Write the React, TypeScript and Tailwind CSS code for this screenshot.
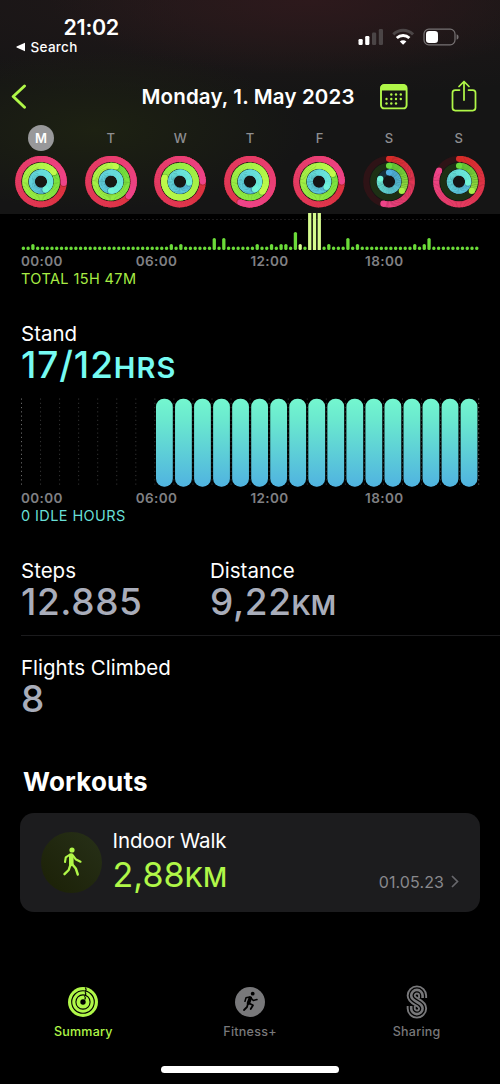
import type { ReactNode } from "react";
import clsx from "clsx";

type Rgb = [number, number, number];

// progress of each ring in laps: move, exercise, stand
const days = [
  { name: "M", rings: [1.26, 1.15, 1.42], selected: true },
  { name: "T", rings: [1.36, 1.05, 1.5] },
  { name: "W", rings: [1.25, 1.79, 1.27] },
  { name: "T", rings: [1.57, 1.36, 1.41] },
  { name: "F", rings: [1.25, 1.17, 1.35] },
  { name: "S", rings: [0.54, 0.35, 0.8] },
  { name: "S", rings: [0.83, 0.35, 1.27] },
];

const ringStyles: { r: number; from: Rgb; to: Rgb; track: string }[] = [
  { r: 22.75, from: [215, 45, 40], to: [238, 68, 138], track: "#2e1316" },
  { r: 15.8, from: [105, 220, 60], to: [192, 250, 75], track: "#1d3014" },
  { r: 9.15, from: [80, 175, 225], to: [112, 243, 215], track: "#172f3a" },
];

const hours = ["00:00", "06:00", "12:00", "18:00"];

// quarter hour bars that are higher than the idle dot
const exercise: Record<number, number> = {
  2: 6, 31: 6, 33: 6, 40: 12, 42: 12, 49: 6, 52: 6, 54: 6, 55: 6, 57: 18,
  58: 6, 60: 40, 61: 40, 62: 40, 64: 6, 68: 12, 70: 6, 82: 6, 84: 6, 85: 12,
};
const workoutBars = [58, 60, 61, 62];

const point = (r: number, lap: number) => {
  const a = lap * Math.PI * 2;
  return [26 + r * Math.sin(a), 26 - r * Math.cos(a)];
};

const mix = (from: Rgb, to: Rgb, t: number) =>
  `rgb(${from.map((c, i) => Math.round(c + (to[i] - c) * t)).join(",")})`;

const Ring = ({ index, value }: { index: number; value: number }) => {
  const { r, from, to, track } = ringStyles[index];
  const steps = 90;
  const reach = index === 1 && value < 1 ? 0.7 : 1;
  const [sx, sy] = point(r, 0);
  const [ex, ey] = point(r, value);
  const [hx, hy] = point(r, value + 0.3 / r / 2);

  return (
    <g>
      <circle cx="26" cy="26" r={r} fill="none" stroke={track} strokeWidth="6.2" />
      <circle cx={sx} cy={sy} r="3.05" fill={mix(from, to, 0)} />
      {Array.from({ length: steps }, (_, i) => {
        const [x1, y1] = point(r, (value * i) / steps);
        const [x2, y2] = point(r, (value * Math.min(i + 1.3, steps)) / steps);
        return (
          <path
            key={i}
            d={`M${x1} ${y1}A${r} ${r} 0 0 1 ${x2} ${y2}`}
            fill="none"
            stroke={mix(from, to, (reach * i) / steps)}
            strokeWidth="6.1"
          />
        );
      })}
      {value > 1 && <circle cx={hx} cy={hy} r="3" fill="#000" opacity="0.2" />}
      <circle cx={ex} cy={ey} r="3.05" fill={mix(from, to, reach)} />
    </g>
  );
};

const StatusBar = () => (
  <div className="flex h-[60px] justify-between pt-[16px]">
    <div className="pl-[16px]">
      <p className="pl-[47.5px] text-[21.5px] leading-[23px] font-semibold tracking-[-0.3px]">
        21:02
      </p>
      <div className="flex h-[16px] items-center">
        <svg width="10" height="10" viewBox="0 0 10 10" fill="#fff">
          <path d="M9 .8v8.4L.6 5.6Q0 5 .6 4.4z" />
        </svg>
        <p className="pl-[4.5px] text-[13.5px] leading-4 font-medium tracking-[0.3px]">Search</p>
      </div>
    </div>
    <div className="flex items-start pt-[12px] pr-[41px]">
      <svg width="26" height="18" viewBox="0 0 26 18" fill="#fff">
        <rect x=".5" y="11" width="4.2" height="6" rx="1.2" />
        <rect x="7.2" y="8" width="4.2" height="9" rx="1.2" />
        <rect x="14" y="4.5" width="4.2" height="12.5" rx="1.2" fill="#4b4546" />
        <rect x="20.8" y="1" width="4.2" height="16" rx="1.2" fill="#4b4546" />
      </svg>
      <svg className="ml-[8px]" width="22" height="18" viewBox="0 0 22 18" fill="none">
        <path d="M1.3 6.4C7 .9 15.4 .9 21 6.4" stroke="#4b4546" strokeWidth="2.9" />
        <path d="M4.8 10C8.4 6.6 13.8 6.6 17.4 10" stroke="#fff" strokeWidth="2.9" />
        <path d="M11.1 16.8L7.8 13.4C9.6 11.8 12.6 11.8 14.4 13.4z" fill="#fff" />
      </svg>
      <svg className="ml-[9px]" width="36" height="18" viewBox="0 0 36 18">
        <rect x="1" y="1.2" width="31" height="15.6" rx="4.8" fill="none" stroke="#777374" strokeWidth="1.2" />
        <rect x="3" y="3" width="12" height="12" rx="3.2" fill="#fff" />
        <path d="M33.6 6.3q2 .7 2 2.7t-2 2.7z" fill="#777374" />
      </svg>
    </div>
  </div>
);

const Header = () => (
  <header className="h-[214px] w-full overflow-hidden bg-[#151515] bg-[radial-gradient(ellipse_260px_75px_at_310px_0px,#2d191c,transparent),radial-gradient(ellipse_210px_80px_at_95px_130px,#1d2112,transparent),radial-gradient(ellipse_500px_100px_at_250px_0px,#211819,transparent)]">
    <StatusBar />
    <div className="flex h-[73px] items-center">
      <svg className="ml-[11px]" width="16" height="26" viewBox="0 0 16 26" fill="none">
        <path d="M13.5 2L2.2 12.500l11.300 10.800" stroke="#b0f748" strokeWidth="2.9" strokeLinecap="round" strokeLinejoin="round" />
      </svg>
      <h1 className="ml-[114.5px] w-[238px] text-[20.5px] leading-6 font-semibold tracking-[0.15px] whitespace-nowrap">
        Monday, 1. May 2023
      </h1>
      <svg width="28" height="26" viewBox="0 0 28 26" fill="none">
        <rect x="1" y="1" width="25.6" height="23.4" rx="3.2" stroke="#b0f748" strokeWidth="1.9" />
        <path d="M.5 6.5V4Q.5.5 4 .5h19.6Q27 .5 27 4v2.5z" fill="#b0f748" />
        {[10.5, 15, 19.5].map((y, row) =>
          [6.5, 11.3, 16, 20.8].map((x, col) =>
            (row === 0 && col === 0) || (row === 2 && col === 3) ? null : (
              <circle key={`${x}-${y}`} cx={x} cy={y} r="1.2" fill="#b0f748" />
            )
          )
        )}
      </svg>
      <svg className="-mt-[2px] ml-[43.5px]" width="26" height="32" viewBox="0 0 26 32" fill="none" stroke="#b0f748" strokeWidth="1.75" strokeLinecap="round" strokeLinejoin="round">
        <path d="M8.5 10H4.2Q1.5 10 1.5 12.7V27.8Q1.5 30.5 4.2 30.5H21.8Q24.5 30.5 24.5 27.8V12.7Q24.5 10 21.8 10H17.5" />
        <path d="M13 20V1.5M8 6.5l5-5 5 5" />
      </svg>
    </div>
    <div className="flex h-[81px] pl-[6.3px]">
      {days.map((day, i) => (
        <div key={i} className="flex w-[69.6px] flex-col items-center">
          <span
            className={clsx(
              "-mt-[8px] flex size-[26px] items-center justify-center rounded-full pt-px text-[13px]",
              day.selected ? "bg-[#98989a] font-semibold text-white" : "font-medium text-[#8e8e91]"
            )}
          >
            {day.name}
          </span>
          <svg className="mt-[4.5px] shrink-0" width="52" height="52" viewBox="0 0.4 52 52">
            {day.rings.map((value, n) => (
              <Ring key={n} index={n} value={value} />
            ))}
          </svg>
        </div>
      ))}
    </div>
  </header>
);

const HourLabels = () => (
  <div className="flex h-[18px] items-center text-[13.5px] font-semibold tracking-[0.4px] text-[#808084]">
    {hours.map((hour) => (
      <span key={hour} className="w-[114.7px]">
        {hour}
      </span>
    ))}
  </div>
);

const ExerciseChart = () => (
  <svg className="-ml-px" width="460" height="37" viewBox="20 213 460 37">
    <path d="M20.5 219.5H479" stroke="#3a3638" strokeDasharray="1 3" />
    {Array.from({ length: 96 }, (_, i) => {
      const h = exercise[i] ?? 3.5;
      return (
        <rect
          key={i}
          x={21.7 + i * 4.773}
          y={250 - h}
          width="3.3"
          height={h}
          rx={h > 20 ? 0.6 : 1.6}
          fill={workoutBars.includes(i) ? "#d5fb8e" : "#6bdb39"}
        />
      );
    })}
  </svg>
);

const StandChart = () => (
  <svg className="-ml-px" width="460" height="90" viewBox="20 398 460 90">
    <defs>
      <linearGradient id="stand" x1="0" y1="0" x2="0" y2="1">
        <stop offset="0" stopColor="#74f7cf" />
        <stop offset="0.25" stopColor="#6ae8cf" />
        <stop offset="1" stopColor="#50b3e0" />
      </linearGradient>
    </defs>
    {Array.from({ length: 25 }, (_, i) => (
      <path
        key={i}
        d={`M${21.5 + i * 19.05} 398.5V486`}
        stroke={i % 24 === 0 ? "#6a6a6a" : "#333"}
        strokeDasharray="1.2 3.05"
      />
    ))}
    {Array.from({ length: 17 }, (_, i) => (
      <rect
        key={i}
        x={156 + i * 19.04}
        y="398.7"
        width="16.8"
        height="88"
        rx="8"
        fill="url(#stand)"
      />
    ))}
  </svg>
);

const Stat = ({ title, children, className }: { title: string; children: ReactNode; className?: string }) => (
  <div className={className}>
    <p className="text-[20.5px] leading-[30px]">{title}</p>
    <p className="text-[37px] leading-[32px] font-medium tracking-[0.6px] text-[#a9adba]">{children}</p>
  </div>
);

const Tab = ({ label, active, children }: { label: string; active?: boolean; children: ReactNode }) => (
  <div className={clsx("flex flex-1 flex-col items-center", active ? "text-[#b0f748]" : "text-[#78787a]")}>
    <div className="flex h-[40px] items-center">{children}</div>
    <span className="mt-[2px] text-[12.5px] leading-[16px] font-medium tracking-[0.25px]">{label}</span>
  </div>
);

const App = () => {
  return (
    <div className="h-[1084px] w-[500px] overflow-hidden bg-black font-['Inter',sans-serif] text-white">
      <Header />
      <main className="h-[768px] pl-[21px]">
        <section className="-mt-px">
          <ExerciseChart />
          <div className="mt-[2.5px]">
            <HourLabels />
          </div>
          <p className="-mt-px text-[14.5px] leading-[17px] tracking-[0.4px] text-[#a8ec44]">TOTAL 15H 47M</p>
        </section>

        <section className="mt-[32.5px]">
          <p className="text-[20.5px] leading-[30px]">Stand</p>
          <p className="text-[37px] leading-[32px] font-medium tracking-[0.9px] text-[#76fbf2]">
            17/12<span className="text-[29px] font-semibold tracking-[1.1px]">HRS</span>
          </p>
          <div className="mt-[14px]">
            <StandChart />
          </div>
          <div className="mt-[1.5px]">
            <HourLabels />
          </div>
          <p className="-mt-[0.5px] text-[14.5px] leading-[17px] tracking-[0.4px] text-[#68dfd6]">0 IDLE HOURS</p>
        </section>

        <section className="mt-[32px]">
          <div className="flex h-[80px] border-b border-[#1b1b1d]">
            <Stat title="Steps" className="w-[189px]">
              12.885
            </Stat>
            <Stat title="Distance">
              9,22<span className="text-[27.5px] font-semibold tracking-normal">KM</span>
            </Stat>
          </div>
          <Stat title="Flights Climbed" className="mt-[17px]">
            8
          </Stat>
        </section>

        <section className="mt-[50.5px] -ml-px">
          <h2 className="pl-[3px] text-[26px] leading-[32px] font-bold tracking-[0.2px]">Workouts</h2>
          <div className="mt-[15px] flex h-[99px] w-[460px] items-center rounded-[14px] bg-[#1c1c1e] pl-[21px]">
            <div className="flex size-[61px] items-center justify-center rounded-full bg-linear-to-tr from-[#1b2006] to-[#273018]">
              <svg width="20" height="30" viewBox="0 0 20 30" fill="none" stroke="#b0f748" strokeLinecap="round" strokeLinejoin="round">
                <circle cx="10" cy="3" r="2.6" fill="#b0f748" stroke="none" />
                <path d="M9.3 8.5v8.5" strokeWidth="4.6" />
                <path d="M8 7.5L3.8 10.3L3 15" strokeWidth="2.1" />
                <path d="M11 8.5l2.6 3.7 4.9 2.5" strokeWidth="2.1" />
                <path d="M8.5 17.5l-1.8 5.5-4.2 4.2" strokeWidth="2.4" />
                <path d="M10 17l3.8 4.5 2 6" strokeWidth="2.4" />
              </svg>
            </div>
            <div className="pb-[4px] pl-[10.5px]">
              <p className="text-[20.5px] leading-[30px] tracking-[-0.1px]">Indoor Walk</p>
              <p className="h-[38px] text-[34px] leading-[38px] tracking-[0.1px] text-[#b0f748]">
                2,88<span className="text-[26.5px] font-medium">KM</span>
              </p>
            </div>
            <div className="mt-[39px] mr-[21px] ml-auto flex items-center gap-[7px]">
              <span className="text-[16px] leading-5 tracking-[0.1px] text-[#88888c]">01.05.23</span>
              <svg width="8" height="13" viewBox="0 0 8 13" fill="none" stroke="#68686c" strokeWidth="1.7">
                <path d="M1 1l5.5 5.5L1 12" />
              </svg>
            </div>
          </div>
        </section>
      </main>

      <nav className="flex h-[85px] pt-px">
        <Tab label="Summary" active>
          <svg width="30" height="30" viewBox="0 0 30 30" fill="none" stroke="currentColor">
            <circle cx="15" cy="15" r="15" fill="currentColor" stroke="none" />
            <circle cx="15" cy="15" r="11.3" stroke="#000" strokeWidth="1.1" />
            <circle cx="15" cy="15" r="7.1" stroke="#000" strokeWidth="1.1" />
            <circle cx="15" cy="15" r="2.7" fill="#000" stroke="none" />
            <path d="M17.3 0.5q1.6 2 0 4M17 5.2q1.6 1.7 0 3.5M16.5 9.2q1.6 1.7.2 3.4" stroke="#000" strokeWidth="1.1" />
          </svg>
        </Tab>
        <Tab label="Fitness+">
          <svg width="30" height="30" viewBox="0 0 30 30" fill="none" stroke="#000" strokeLinecap="round" strokeLinejoin="round">
            <circle cx="15" cy="15" r="15" fill="currentColor" stroke="none" />
            <circle cx="17.7" cy="6.7" r="1.9" fill="#000" stroke="none" />
            <path d="M15.3 11l-1.8 5" strokeWidth="3.6" />
            <path d="M14.5 10l-3.5.8-1 3.500M16.500 11.500l1.800 2 3.700-.9" strokeWidth="1.500" />
            <path d="M13.5 16l4.5 2.2-2.3 3.8M13 16.5l-1 3.5-3 3" strokeWidth="1.8" />
          </svg>
        </Tab>
        <Tab label="Sharing">
          <svg width="22" height="34" viewBox="0 0 22 34" fill="none">
            {[
              { color: "currentColor", width: 9 },
              { color: "#000", width: 5.2 },
              { color: "currentColor", width: 2.6 },
            ].map(({ color, width }) => (
              <path
                key={width}
                d="M16.600 13V10.600A5.700 5.700 0 0 0 5.200 10.600C5.200 17.500 16.600 16.500 16.600 23.400A5.700 5.700 0 0 1 5.200 23.400V21"
                stroke={color}
                strokeWidth={width}
              />
            ))}
          </svg>
        </Tab>
      </nav>
      <div className="mx-auto h-[6.5px] w-[178px] rounded-full bg-white" />
    </div>
  );
};

export default App;
